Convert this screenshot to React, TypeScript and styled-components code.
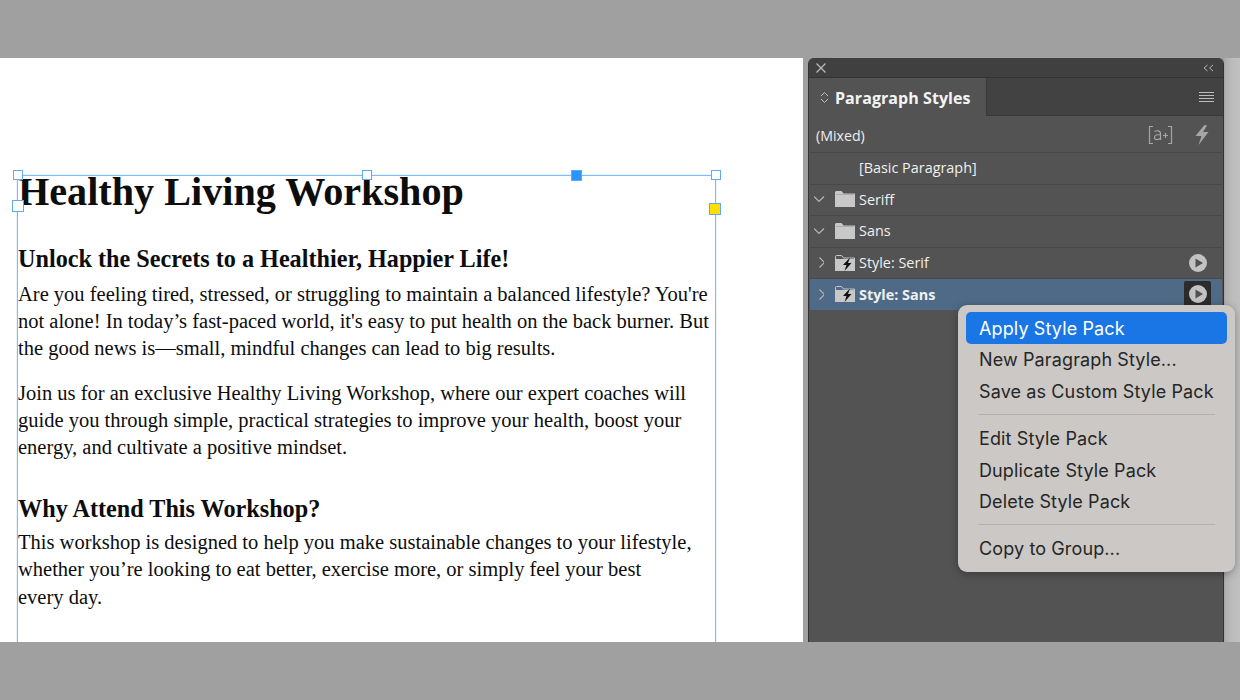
import { FC } from "react";
import styled, { createGlobalStyle } from "styled-components";

const GlobalStyle = createGlobalStyle`
  html, body {
    margin: 0;
    padding: 0;
    background: #a0a0a0;
  }
  #root {
    width: 1240px;
    height: 700px;
    overflow: hidden;
  }
`;

const Screen = styled.div`
  width: 1240px;
  height: 700px;
  display: flex;
  flex-direction: column;
  background: #a0a0a0;
`;

const Band = styled.div`
  height: 58px;
  flex: none;
  background: #a0a0a0;
`;

const Workspace = styled.div`
  position: relative;
  height: 584px;
  display: flex;
  overflow: hidden;
  background: linear-gradient(90deg, #a0a0a0 0, #a0a0a0 1224px, #aeaeae 1225px, #bcbcbc 1232px, #c0c0c0 100%);
`;

const Page = styled.div`
  width: 803px;
  flex: none;
  background: #fff;
  padding: 117px 0 0 17px;
  box-sizing: border-box;
  overflow: hidden;
`;

const Frame = styled.div`
  position: relative;
  width: 699px;
  height: 480px;
  box-sizing: border-box;
  border: 1px solid #7fbcf7;
  border-bottom: none;
  box-shadow: 0 0 1px #7fbcf7;
  font-family: "Liberation Serif", serif;
  color: #0d0d0d;
`;

const Handle = styled.span<{ $x: number; $y: number; $fill?: string; $size?: number }>`
  position: absolute;
  left: ${(p) => p.$x}px;
  top: ${(p) => p.$y}px;
  width: ${(p) => p.$size ?? 10}px;
  height: ${(p) => p.$size ?? 10}px;
  box-sizing: border-box;
  background: ${(p) => p.$fill ?? "#fff"};
  border: 1px solid #5eaaf5;
`;

const Title = styled.h1`
  margin: 0;
  font-size: 40.2px;
  line-height: 32px;
  font-weight: 700;
`;

const Heading = styled.h2<{ $top: number }>`
  margin: ${(p) => p.$top}px 0 0;
  font-size: 24.2px;
  line-height: 30px;
  font-weight: 700;
`;

const Copy = styled.p<{ $top: number }>`
  margin: ${(p) => p.$top}px 0 0;
  font-size: 20.5px;
  line-height: 27.2px;
  white-space: nowrap;
`;

const Panel = styled.aside`
  width: 416px;
  height: 584px;
  margin-left: 5px;
  flex: none;
  box-sizing: border-box;
  display: flex;
  flex-direction: column;
  background: #535353;
  border-left: 1px solid #333;
  border-right: 1px solid #333;
  border-radius: 6px 6px 0 0;
  font-family: "Open Sans", sans-serif;
  color: #f0f0f0;
  overflow: hidden;
`;

const TitleBar = styled.div`
  height: 20px;
  flex: none;
  box-sizing: border-box;
  display: flex;
  align-items: center;
  justify-content: space-between;
  padding: 1px 9px 0 6px;
  background: #404040;
  border-bottom: 1px solid #333;
  color: #b4b4b4;
`;

const TabRow = styled.div`
  height: 38px;
  flex: none;
  box-sizing: border-box;
  display: flex;
  align-items: stretch;
  justify-content: space-between;
  padding-right: 9px;
  background: #424242;
  border-bottom: 1px solid #383838;
`;

const Tab = styled.div`
  width: 178px;
  margin-bottom: -1px;
  display: flex;
  align-items: center;
  gap: 6px;
  padding: 1px 0 0 11px;
  box-sizing: border-box;
  background: #535353;
  border-right: 1px solid #383838;
  font-size: 16px;
  font-weight: 700;
  letter-spacing: 0.06px;
  color: #f4f4f4;
`;

const MenuLines = styled.div`
  align-self: center;
  display: flex;
  flex-direction: column;
  gap: 2px;
  width: 15px;
  & > span {
    height: 1px;
    background: #bcbcbc;
  }
`;

const MixedRow = styled.div`
  height: 36px;
  flex: none;
  display: flex;
  align-items: center;
  padding: 2px 14px 0 7px;
  box-sizing: border-box;
  font-size: 14.2px;
  font-weight: 500;
  color: #eee;
`;

const MixedTools = styled.div`
  margin-left: auto;
  display: flex;
  align-items: center;
  gap: 22px;
`;

const StyleRow = styled.div<{ $selected?: boolean; $indent?: boolean }>`
  height: 31.6px;
  flex: none;
  display: flex;
  align-items: center;
  margin: 0 1px;
  padding: 0 11px 1px ${(p) => (p.$indent ? 49 : 3)}px;
  box-sizing: border-box;
  border-top: 1px solid #484848;
  background: ${(p) => (p.$selected ? "#4e6a86" : "transparent")};
  font-size: 14.4px;
  font-weight: ${(p) => (p.$selected ? 700 : 400)};
  color: #f0f0f0;
`;

const Chevron = styled.span`
  width: 14px;
  margin-right: 8px;
  display: flex;
  justify-content: center;
  color: #b8b8b8;
`;

const RowIcon = styled.span`
  width: 20px;
  height: 16px;
  margin-right: 4px;
  display: flex;
`;

const PlayWrap = styled.span<{ $active?: boolean }>`
  margin-left: auto;
  width: 27px;
  height: 27px;
  display: flex;
  align-items: center;
  justify-content: center;
  border-radius: 2px;
  background: ${(p) => (p.$active ? "#2b2b2b" : "transparent")};
`;

const ContextMenu = styled.div`
  position: absolute;
  left: 958px;
  top: 247px;
  width: 277px;
  height: 267px;
  box-sizing: border-box;
  padding: 7px 8px;
  border-radius: 9px;
  background: #cbc8c5;
  box-shadow: 0 2px 8px rgba(0, 0, 0, 0.3);
  font-family: Inter, sans-serif;
  font-size: 18px;
  letter-spacing: 0.12px;
  color: #262626;
`;

const MenuItem = styled.div<{ $active?: boolean }>`
  height: 31.6px;
  box-sizing: border-box;
  display: flex;
  align-items: center;
  padding: 1px 0 0 13px;
  border-radius: 5px;
  background: ${(p) => (p.$active ? "#1a76e4" : "transparent")};
  color: ${(p) => (p.$active ? "#fff" : "#262626")};
  white-space: nowrap;
`;

const MenuDivider = styled.div`
  height: 1px;
  margin: 7px 12px 7.5px;
  background: #b5b0ae;
`;

const Close: FC = () => (
  <svg width="12" height="12" viewBox="0 0 12 12" fill="none" stroke="#b8b8b8" strokeWidth="1.3">
    <path d="M1.500 1.500l9 9M10.500 1.500l-9 9" />
  </svg>
);

const Collapse: FC = () => (
  <svg width="11" height="8" viewBox="0 0 11 8" fill="none" stroke="#b4b4b4" strokeWidth="1">
    <path d="M4.500 1L1 4l3.500 3M10 1L6.500 4 10 7" />
  </svg>
);

const Updown: FC = () => (
  <svg width="9" height="13" viewBox="0 0 9 13" fill="none" stroke="#bdbdbd" strokeWidth="1">
    <path d="M1 5l3.500-3.500L8 5M1 8l3.500 3.500L8 8" />
  </svg>
);

const NewGroup: FC = () => (
  <svg width="25" height="20" viewBox="0 0 25 20" fill="none" stroke="#a6a6a6" strokeWidth="1.2">
    <path d="M5 1.500H1.500v17H5M20 1.500h3.500v17H20" />
    <path d="M6.500 6.500c1-1 6-1.500 6 2V15M12.500 9.500c-3 0-6 .5-6 3 0 3 4.500 2.500 6 .5M15 10.500h5M17.500 8v5" />
  </svg>
);

const Bolt: FC = () => (
  <svg width="14" height="20" viewBox="0 0 14 20" fill="#a6a6a6">
    <path d="M9.500 0L0.500 11h6L3.500 20l10-13H8L12 .5z" />
  </svg>
);

const Folder: FC = () => (
  <svg width="20" height="16" viewBox="0 0 20 16" fill="#c8c8c8">
    <path d="M0 1.500C0 .7.700 0 1.500 0h5l2 2.500H20V16H0z" />
    <path d="M1 3.500h18" stroke="#9a9a9a" strokeWidth="0.6" />
  </svg>
);

const PackFolder: FC = () => (
  <svg width="20" height="16" viewBox="0 0 20 16">
    <path d="M.5 4V1.500c0-.6.400-1 1-1h5l2 2.500h11V5" fill="none" stroke="#c8c8c8" />
    <path d="M0 4h20v12H0z" fill="#c8c8c8" />
    <path d="M15 2.500L8 10h3.500L9.500 16l7-8h-3.500z" fill="#111" />
  </svg>
);

const ChevronRight: FC = () => (
  <svg width="8" height="13" viewBox="-2 0 8 13" fill="none" stroke="currentColor" strokeWidth="1.1">
    <path d="M1.500 1.500l5 5-5 5" />
  </svg>
);

const ChevronDown: FC = () => (
  <svg width="12" height="8" viewBox="1 0 12 8" fill="none" stroke="currentColor" strokeWidth="1.1">
    <path d="M1 1.500l5 5 5-5" />
  </svg>
);

const Play: FC = () => (
  <svg width="18" height="18" viewBox="0 0 18 18">
    <circle cx="9" cy="9" r="9" fill="#c2c2c2" />
    <path d="M6.500 4.500l7.500 4.500-7.500 4.500z" fill="#505050" />
  </svg>
);

const rows = [
  { label: "Seriff", kind: "group" },
  { label: "Sans", kind: "group" },
  { label: "Style: Serif", kind: "pack" },
  { label: "Style: Sans", kind: "pack", selected: true },
];

const App: FC = () => (
  <Screen>
    <GlobalStyle />
    <Band />
    <Workspace>
      <Page>
        <Frame>
          <Handle $x={-5} $y={-6} />
          <Handle $x={344} $y={-6} />
          <Handle $x={693} $y={-6} />
          <Handle $x={-6} $y={24} $size={12} />
          <Handle $x={553} $y={-6} $size={11} $fill="#2b95ff" />
          <Handle $x={691} $y={27} $size={12} $fill="#ffdf00" />
          <Title>Healthy Living Workshop</Title>
          <Heading $top={36}>Unlock the Secrets to a Healthier, Happier Life!</Heading>
          <Copy $top={7}>
            Are you feeling tired, stressed, or struggling to maintain a balanced lifestyle? You're
            <br />
            not alone! In today’s fast-paced world, it's easy to put health on the back burner. But
            <br />
            the good news is—small, mindful changes can lead to big results.
          </Copy>
          <Copy $top={17}>
            Join us for an exclusive Healthy Living Workshop, where our expert coaches will
            <br />
            guide you through simple, practical strategies to improve your health, boost your
            <br />
            energy, and cultivate a positive mindset.
          </Copy>
          <Heading $top={33}>Why Attend This Workshop?</Heading>
          <Copy $top={5}>
            This workshop is designed to help you make sustainable changes to your lifestyle,
            <br />
            whether you’re looking to eat better, exercise more, or simply feel your best
            <br />
            every day.
          </Copy>
        </Frame>
      </Page>
      <Panel>
        <TitleBar>
          <Close />
          <Collapse />
        </TitleBar>
        <TabRow>
          <Tab>
            <Updown />
            Paragraph Styles
          </Tab>
          <MenuLines>
            <span />
            <span />
            <span />
            <span />
          </MenuLines>
        </TabRow>
        <MixedRow>
          (Mixed)
          <MixedTools>
            <NewGroup />
            <Bolt />
          </MixedTools>
        </MixedRow>
        <StyleRow $indent>[Basic Paragraph]</StyleRow>
        {rows.map((row) => (
          <StyleRow key={row.label} $selected={row.selected}>
            <Chevron>{row.kind === "group" ? <ChevronDown /> : <ChevronRight />}</Chevron>
            <RowIcon>{row.kind === "group" ? <Folder /> : <PackFolder />}</RowIcon>
            {row.label}
            {row.kind === "pack" && (
              <PlayWrap $active={row.selected}>
                <Play />
              </PlayWrap>
            )}
          </StyleRow>
        ))}
      </Panel>
      <ContextMenu>
        <MenuItem $active>Apply Style Pack</MenuItem>
        <MenuItem>New Paragraph Style...</MenuItem>
        <MenuItem>Save as Custom Style Pack</MenuItem>
        <MenuDivider />
        <MenuItem>Edit Style Pack</MenuItem>
        <MenuItem>Duplicate Style Pack</MenuItem>
        <MenuItem>Delete Style Pack</MenuItem>
        <MenuDivider />
        <MenuItem>Copy to Group...</MenuItem>
      </ContextMenu>
    </Workspace>
    <Band />
  </Screen>
);

export default App;
